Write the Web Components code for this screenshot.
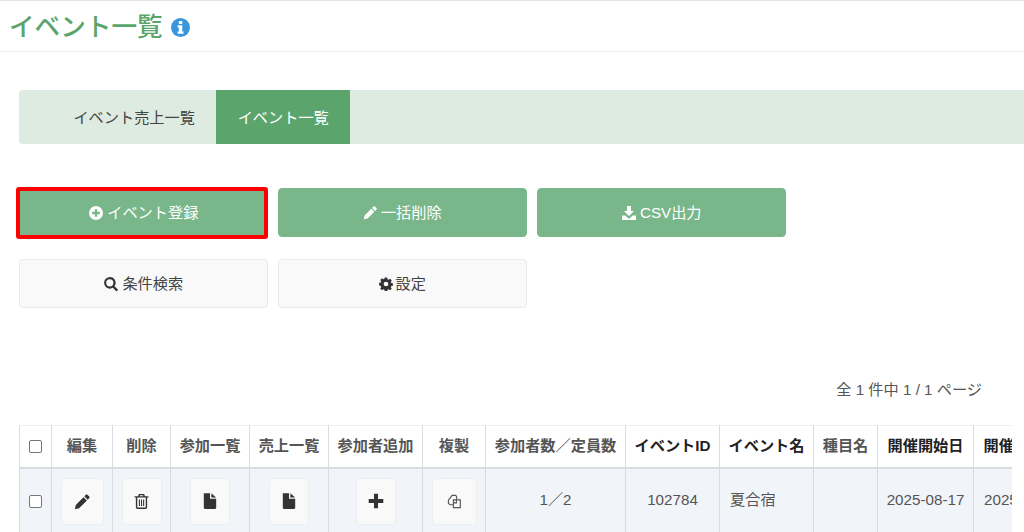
<!DOCTYPE html>
<html lang="ja">
<head>
<meta charset="utf-8">
<title>イベント一覧</title>
<style>
  html, body { margin: 0; height: 100%; overflow: hidden; background: #fff; }
  body { font: 15.2px "Liberation Sans", "Noto Sans CJK JP", sans-serif; color: #555; }
</style>
</head>
<body>
<event-page></event-page>

<script>
// icons are drawn on a 16x16 box
const ICONS = {
  info: '<circle cx="8" cy="8" r="8" fill="#3b97dc"/><rect x="6.6" y="2.6" width="2.9" height="2.5" rx=".4" fill="#fff"/><path d="M5.6 6.2h3.9v5.2h1v1.9H5.6v-1.9h1V8.1h-1z" fill="#fff"/>',
  plusCircle: '<path fill-rule="evenodd" d="M8 1a7 7 0 1 1 0 14A7 7 0 0 1 8 1zM6.8 4.2v2.6H4.2v2.4h2.6v2.6h2.4V9.2h2.6V6.800H9.200V4.200z"/>',
  pencil: '<path d="M11.200 1.600a1 1 0 0 1 1.400 0l1.800 1.800a1 1 0 0 1 0 1.400l-1.500 1.500-3.200-3.200zM8.900 3.900l3.200 3.200-7.300 7.300-4 .9.9-4z"/>',
  download: '<path d="M6 1h4v5h3L8 11 3 6h3zM1 10.500h3.400L6.600 12.700a2 2 0 0 0 2.800 0l2.200-2.200H15V15H1z"/>',
  search: '<path fill-rule="evenodd" d="M6.800 1a5.800 5.800 0 0 1 4.700 9.200l3.600 3.600-1.600 1.600-3.600-3.600A5.800 5.800 0 1 1 6.800 1zm0 2.200a3.600 3.600 0 1 0 0 7.200 3.600 3.600 0 0 0 0-7.200z"/>',
  cog: '<path fill-rule="evenodd" d="M6.600 1h2.800l.4 1.900 1.200.5 1.600-1.100 2 2-1.100 1.600.5 1.200 1.900.4v2.800l-1.900.4-.5 1.200 1.100 1.600-2 2-1.600-1.100-1.200.5-.4 1.900H6.600l-.4-1.900-1.200-.5-1.600 1.100-2-2 1.100-1.600-.5-1.200L.1 9.700V6.900l1.900-.4.5-1.200-1.100-1.600 2-2L5 2.800l1.200-.5zM8 5.600a2.700 2.700 0 1 0 0 5.400 2.700 2.700 0 0 0 0-5.400z" transform="translate(0 -.3)"/>',
  file: '<path d="M2.500 1H8v5h5.500v8a1 1 0 0 1-1 1h-9a1 1 0 0 1-1-1zM9.200 1.100l4.200 3.700H9.200z"/>',
  trash: '<path fill-rule="evenodd" d="M5.600 1h4.800l.9 2H14.500v1.300h-1.200v9.200a1.500 1.500 0 0 1-1.500 1.500H4.200a1.500 1.500 0 0 1-1.500-1.500V4.300H1.500V3h3.200zM6.200 3h3.600l-.4-.8H6.600zM4 4.300v9.200c0 .1.100.2.200.2h7.600c.1 0 .2-.1.200-.2V4.300zM5.500 6h1v6.200h-1zm2 0h1v6.200h-1zm2 0h1v6.200h-1z"/>',
  plus: '<path d="M6.200 1.500h3.600v4.700h4.700v3.600H9.800v4.700H6.200V9.800H1.500V6.200h4.700z"/>',
  copy: '<g fill="none" stroke="#555" stroke-width="1.200" stroke-linejoin="miter"><path d="M6.500 11.500H3.200L1.500 9.800V6.500L5.500 1.500h3.800l1 1.300v3.400"/><path d="M6.800 6.200h7.400v8.300H6.800zM6.800 9.500h3.200V6.200"/></g>'
};

function icon(name, size) {
  return `<svg width="${size}" height="${size}" viewBox="0 0 16 16" fill="currentColor" aria-hidden="true">${ICONS[name]}</svg>`;
}

class PageHeader extends HTMLElement {
  constructor() {
    super();
    this.attachShadow({ mode: 'open' });
    this.shadowRoot.innerHTML = `
      <style>
        :host {
          display: flex;
          align-items: center;
          gap: 8px;
          box-sizing: border-box;
          height: 52px;
          padding: 3px 0 0 9px;
          border-top: 1px solid #e4e4e4;
          border-bottom: 1px solid #f0f0f0;
        }
        h1 { margin: 0; font-size: 25.6px; font-weight: 500; line-height: 1; color: #5ba56d; }
        svg { display: block; }
      </style>
      <h1><slot></slot></h1>
      ${icon('info', 19)}
    `;
  }
}

class TabBar extends HTMLElement {
  constructor() {
    super();
    this.attachShadow({ mode: 'open' });
    this.shadowRoot.innerHTML = `
      <style>
        :host {
          display: flex;
          height: 54px;
          margin: 38px 0 0 19px;
          padding-left: 33px;
          background: #deebe0;
          border-radius: 4px 0 0 4px;
        }
      </style>
      <slot></slot>
    `;
  }
}

class TabItem extends HTMLElement {
  constructor() {
    super();
    this.attachShadow({ mode: 'open' });
    this.shadowRoot.innerHTML = `
      <style>
        :host {
          display: flex;
          align-items: center;
          padding: 0 21.4px 3px;
          color: #444;
        }
        :host([active]) { background: #5ba56d; color: #fff; }
      </style>
      <slot></slot>
    `;
  }
}

class ActionButton extends HTMLElement {
  constructor() {
    super();
    this.attachShadow({ mode: 'open' });
    const size = this.getAttribute('size') || 16;
    this.shadowRoot.innerHTML = `
      <style>
        :host {
          position: relative;
          display: flex;
          align-items: center;
          justify-content: center;
          gap: 3px;
          box-sizing: border-box;
          height: 49px;
          border-radius: 4px;
          border: 1px solid #eaeaea;
          background: #f9f9f9;
          color: #444;
        }
        :host([primary]) { background: #79b78a; border-color: #79b78a; color: #fff; }
        /* the red frame sits over the button */
        :host([marked])::after {
          content: "";
          position: absolute;
          inset: -2px -1px -2.500px -4px;
          border: 4.500px solid #f00;
          border-radius: 3px;
        }
        span { margin-bottom: 3px; }
        svg { display: block; }
      </style>
      ${icon(this.getAttribute('icon'), size)}
      <span><slot></slot></span>
    `;
    const svg = this.shadowRoot.querySelector('svg');
    if (!this.hasAttribute('primary')) svg.style.color = '#333';
  }
}

class ActionGrid extends HTMLElement {
  constructor() {
    super();
    this.attachShadow({ mode: 'open' });
    this.shadowRoot.innerHTML = `
      <style>
        :host {
          display: grid;
          grid-template-columns: repeat(3, 248.500px);
          gap: 22px 10.500px;
          margin: 44px 0 0 19px;
        }
      </style>
      <slot></slot>
    `;
  }
}

class IconButton extends HTMLElement {
  constructor() {
    super();
    this.attachShadow({ mode: 'open' });
    const w = this.getAttribute('w') || 40;
    const size = this.getAttribute('size') || 15;
    this.shadowRoot.innerHTML = `
      <style>
        :host {
          display: flex;
          align-items: center;
          justify-content: center;
          box-sizing: border-box;
          width: ${w}px;
          height: 47px;
          margin: 0 auto;
          background: #f9f9f9;
          border: 1px solid #eceef0;
          border-radius: 4px;
          color: #333;
        }
        svg { display: block; }
      </style>
      ${icon(this.getAttribute('icon'), size)}
    `;
  }
}

class EventTable extends HTMLElement {
  constructor() {
    super();
    this.attachShadow({ mode: 'open' });
    const cols = [32, 61, 58, 79, 79, 94, 63, 140, 94, 94, 64, 96, 96];
    const width = cols.reduce((a, b) => a + b, 0);
    const head = [
      ['編集'], ['削除'], ['参加一覧'], ['売上一覧'], ['参加者追加'], ['複製'], ['参加者数／定員数'],
      ['イベントID', 'dark'], ['イベント名', 'dark'], ['種目名'], ['開催開始日', 'dark'], ['開催終了日', 'dark']
    ];
    this.shadowRoot.innerHTML = `
      <style>
        :host {
          display: block;
          width: 993px;
          margin: 0 0 0 19px;
          overflow: hidden;
        }
        table {
          table-layout: fixed;
          width: ${width}px;
          border-collapse: collapse;
          color: #555;
        }
        th, td {
          border: 1px solid #dadde0;
          text-align: center;
          padding: 0;
          line-height: 20px;
          white-space: nowrap;
        }
        thead th { height: 40px; padding-bottom: 1px; font-weight: 700; color: #555; border-top-color: #eceeef; border-bottom-width: 2px; }
        thead th.dark { color: #222; }
        tbody td { height: 64px; background: #f1f4f9; }
        tbody td.txt { height: 62px; padding-bottom: 2px; }
        .check {
          display: block;
          box-sizing: border-box;
          width: 13px;
          height: 13px;
          margin: 0 auto;
          background: #fff;
          border: 1px solid #767676;
          border-radius: 2px;
        }
        thead .check { margin-top: 1px; }
        .name, .cut { text-align: left; padding-left: 10px; }
      </style>
      <table>
        <colgroup>${cols.map(c => `<col style="width:${c}px">`).join('')}</colgroup>
        <thead>
          <tr>
            <th><span class="check"></span></th>
            ${head.map(([t, c]) => `<th class="${c || ''}">${t}</th>`).join('')}
          </tr>
        </thead>
        <tbody>
          <tr>
            <td><span class="check"></span></td>
            <td><icon-button icon="pencil" w="43" size="17"></icon-button></td>
            <td><icon-button icon="trash" size="17"></icon-button></td>
            <td><icon-button icon="file" size="18"></icon-button></td>
            <td><icon-button icon="file" size="18"></icon-button></td>
            <td><icon-button icon="plus" size="18"></icon-button></td>
            <td><icon-button icon="copy" w="45" size="15"></icon-button></td>
            <td class="txt">1／2</td>
            <td class="txt">102784</td>
            <td class="txt name">夏合宿</td>
            <td class="txt"></td>
            <td class="txt">2025-08-17</td>
            <td class="txt cut">2025-08-17</td>
          </tr>
        </tbody>
      </table>
    `;
  }
}

class PageCount extends HTMLElement {
  constructor() {
    super();
    this.attachShadow({ mode: 'open' });
    this.shadowRoot.innerHTML = `
      <style>
        :host {
          display: block;
          margin: 73px 42px 26px 0;
          text-align: right;
          line-height: 18px;
          color: #555;
        }
      </style>
      <slot></slot>
    `;
  }
}

class EventPage extends HTMLElement {
  constructor() {
    super();
    this.attachShadow({ mode: 'open' });
    this.shadowRoot.innerHTML = `
      <style>
        :host { display: block; }
      </style>
      <page-header>イベント一覧</page-header>
      <tab-bar>
        <tab-item>イベント売上一覧</tab-item>
        <tab-item active>イベント一覧</tab-item>
      </tab-bar>
      <action-grid>
        <action-button primary marked icon="plusCircle">イベント登録</action-button>
        <action-button primary icon="pencil" size="15">一括削除</action-button>
        <action-button primary icon="download">CSV出力</action-button>
        <action-button icon="search">条件検索</action-button>
        <action-button icon="cog" size="14">設定</action-button>
      </action-grid>
      <page-count>全 1 件中 1 / 1 ページ</page-count>
      <event-table></event-table>
    `;
  }
}

customElements.define('page-header', PageHeader);
customElements.define('tab-bar', TabBar);
customElements.define('tab-item', TabItem);
customElements.define('action-button', ActionButton);
customElements.define('action-grid', ActionGrid);
customElements.define('icon-button', IconButton);
customElements.define('event-table', EventTable);
customElements.define('page-count', PageCount);
customElements.define('event-page', EventPage);
</script>
</body>
</html>
